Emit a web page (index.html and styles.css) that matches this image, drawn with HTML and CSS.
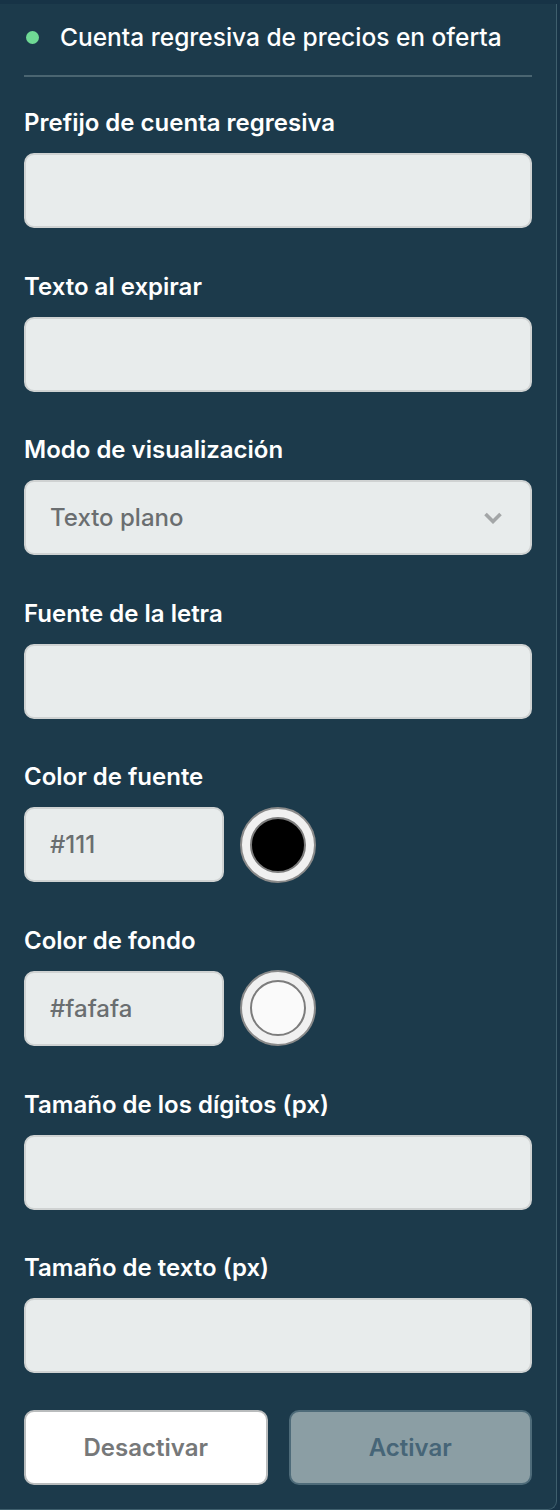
FILE: index.html
```html
<!DOCTYPE html>
<html lang="es">
<head>
<meta charset="utf-8">
<link rel="stylesheet" href="styles.css">
</head>
<body>
<div class="panel">
  <div class="header">
    <span class="dot"></span>
    <span class="title">Cuenta regresiva de precios en oferta</span>
  </div>
  <div class="divider"></div>

  <div class="field">
    <label class="label">Prefijo de cuenta regresiva</label>
    <div class="input"></div>
  </div>
  <div class="field">
    <label class="label">Texto al expirar</label>
    <div class="input"></div>
  </div>
  <div class="field">
    <label class="label">Modo de visualización</label>
    <div class="input select">
      <span class="value">Texto plano</span>
      <svg class="chev" width="20" height="12" viewBox="0 0 20 12"><path d="M2.5 2 L10 9.5 L17.5 2" fill="none" stroke="#a3a6a7" stroke-width="3.6"/></svg>
    </div>
  </div>
  <div class="field">
    <label class="label">Fuente de la letra</label>
    <div class="input"></div>
  </div>
  <div class="field">
    <label class="label">Color de fuente</label>
    <div class="color-row">
      <div class="input short"><span class="value">#111</span></div>
      <span class="swatch"><span class="swatch-inner dark"></span></span>
    </div>
  </div>
  <div class="field">
    <label class="label">Color de fondo</label>
    <div class="color-row">
      <div class="input short"><span class="value">#fafafa</span></div>
      <span class="swatch"><span class="swatch-inner light"></span></span>
    </div>
  </div>
  <div class="field">
    <label class="label">Tamaño de los dígitos (px)</label>
    <div class="input"></div>
  </div>
  <div class="field">
    <label class="label">Tamaño de texto (px)</label>
    <div class="input"></div>
  </div>

  <div class="buttons">
    <button class="btn btn-off">Desactivar</button>
    <button class="btn btn-on">Activar</button>
  </div>
</div>
</body>
</html>
```

FILE: styles.css
```css
* { box-sizing: border-box; }
html, body { margin: 0; padding: 0; }
body {
  background: #173346;
  width: 560px;
  height: 1510px;
  font-family: Inter, "Noto Sans", sans-serif;
  overflow: hidden;
}
.panel {
  margin-top: 4px;
  width: 557px;
  height: 1506px;
  background: #1c3a4b;
  border-right: 1px solid #3f5f6d;
  border-bottom: 1px solid #3f5f6d;
  border-bottom-right-radius: 9px;
  padding: 0 24px 0 24px;
}
.header {
  display: flex;
  align-items: center;
  height: 66px;
  padding-left: 2px;
}
.dot {
  width: 13px;
  height: 13px;
  border-radius: 50%;
  background: #6fd995;
  margin-right: 21px;
}
.title {
  color: #ffffff;
  font-size: 24.5px;
  font-weight: 500;
}
.divider {
  height: 2px;
  background: #4a6571;
  margin-top: 5px;
  margin-bottom: 32px;
}
.field {
  margin-bottom: 44.6px;
}
.label {
  display: block;
  color: #ffffff;
  font-size: 24px;
  font-weight: 600;
  line-height: 28px;
  margin-bottom: 16px;
}
.input {
  height: 75px;
  background: #e8ecec;
  border: 2px solid #cfd2d2;
  border-radius: 10px;
  display: flex;
  align-items: center;
  padding: 0 24px;
}
.value {
  color: #6a6e70;
  font-size: 24px;
  font-weight: 500;
}
.select { justify-content: space-between; padding-right: 27px; }
.color-row {
  display: flex;
  align-items: center;
  gap: 16px;
  height: 75px;
}
.input.short { width: 200px; }
.swatch {
  width: 76px;
  height: 76px;
  flex: none;
  border-radius: 50%;
  background: #f0f0f0;
  border: 2px solid #8a8a8a;
  display: flex;
  align-items: center;
  justify-content: center;
}
.swatch-inner {
  width: 56px;
  height: 56px;
  border-radius: 50%;
  border: 2px solid #7c7c7c;
}
.swatch-inner.dark { background: #000; }
.swatch-inner.light { background: #fafafa; }
.buttons {
  display: flex;
  gap: 21px;
  margin-top: -7.6px;
}
.btn {
  flex: 1;
  height: 75px;
  border-radius: 10px;
  font-family: Inter, "Noto Sans", sans-serif;
  font-size: 24px;
  font-weight: 600;
}
.btn-off {
  background: #ffffff;
  border: 2px solid #b9bcbd;
  color: #767879;
}
.btn-on {
  background: #8b9ea4;
  border: 2px solid #4e6b79;
  color: #466577;
}
```
